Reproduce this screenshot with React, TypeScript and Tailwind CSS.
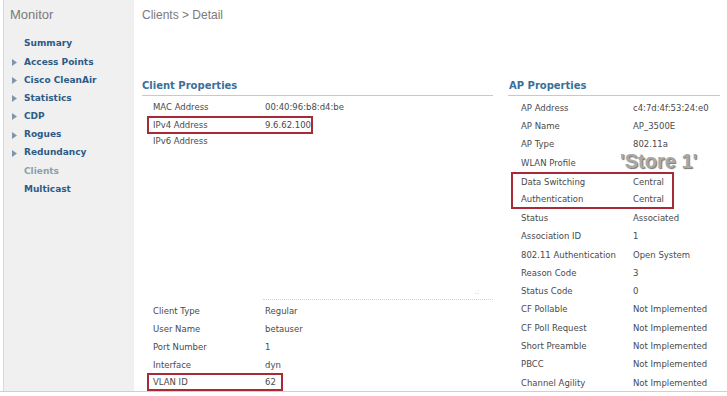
import React from 'react';

const navItems = [
  { label: 'Summary', arrow: false },
  { label: 'Access Points', arrow: true },
  { label: 'Cisco CleanAir', arrow: true },
  { label: 'Statistics', arrow: true },
  { label: 'CDP', arrow: true },
  { label: 'Rogues', arrow: true },
  { label: 'Redundancy', arrow: true },
  { label: 'Clients', arrow: false, muted: true },
  { label: 'Multicast', arrow: false },
];

const apRows: [string, string][] = [
  ['AP Address', 'c4:7d:4f:53:24:e0'],
  ['AP Name', 'AP_3500E'],
  ['AP Type', '802.11a'],
  ['WLAN Profile', ''],
  ['Data Switching', 'Central'],
  ['Authentication', 'Central'],
  ['Status', 'Associated'],
  ['Association ID', '1'],
  ['802.11 Authentication', 'Open System'],
  ['Reason Code', '3'],
  ['Status Code', '0'],
  ['CF Pollable', 'Not Implemented'],
  ['CF Poll Request', 'Not Implemented'],
  ['Short Preamble', 'Not Implemented'],
  ['PBCC', 'Not Implemented'],
  ['Channel Agility', 'Not Implemented'],
];

const Row = ({ label, value, h = 'h-[18.3px]' }: { label: string; value: string; h?: string }) => (
  <div className={`flex items-center ${h}`}>
    <span className="w-[112px] shrink-0">{label}</span>
    <span>{value}</span>
  </div>
);

const Arrow = () => (
  <svg width="5" height="7" viewBox="0 0 5 7" className="mr-[7px]">
    <polygon points="0,0 5,3.5 0,7" fill="#8196a8" />
  </svg>
);

export default function App() {
  return (
    <div className="h-[396px] w-[727px] overflow-hidden bg-white font-['DejaVu_Sans',sans-serif] text-[8.5px] text-[#4a4a4a]">
      <div className="flex h-[392px] border-b border-[#cfcfcf]">
        {/* sidebar */}
        <aside className="ml-[3px] w-[131px] shrink-0 border-l border-[#d8d8d8] bg-[#f0f0f0]">
          <div className="pl-[6px] pt-[7px] font-['Liberation_Sans',sans-serif] text-[13px] leading-[16px] text-[#7a7a7a]">
            Monitor
          </div>
          <nav className="mt-[12px] flex flex-col pl-[8px]">
            {navItems.map((item) => (
              <div key={item.label} className="flex h-[18.2px] items-center">
                {item.arrow ? <Arrow /> : <span className="w-[12px]" />}
                <span
                  className={`text-[9px] font-bold ${item.muted ? 'text-[#8aa0ae]' : 'text-[#2d5b86]'}`}
                >
                  {item.label}
                </span>
              </div>
            ))}
          </nav>
        </aside>

        {/* main */}
        <main className="flex-1 pl-[8px]">
          <div className="pt-[8px] font-['Liberation_Sans',sans-serif] text-[12px] leading-[14px] text-[#7a7a7a]">
            Clients &gt; Detail
          </div>

          <div className="mt-[57px] flex">
            {/* client properties */}
            <section className="w-[351px] shrink-0">
              <h2 className="border-b border-[#c9c9c9] pb-[2px] text-[10px] font-bold leading-[14px] text-[#3a6f98]">
                Client Properties
              </h2>
              <div className="pl-[11px] pt-[3px]">
                <Row label="MAC Address" value="00:40:96:b8:d4:be" h="h-[17px]" />
                <div className="-ml-[6px] flex h-[18px] w-[166px] items-center border-2 border-[#a82a36] pl-[4px]">
                  <span className="w-[112px] shrink-0">IPv4 Address</span>
                  <span>9.6.62.100</span>
                </div>
                <Row label="IPv6 Address" value="" h="h-[14px]" />
                <div className="relative ml-[110px] h-[152px] border-b border-dotted border-[#d4d4d4]">
                  <span className="absolute bottom-[3px] right-[14px] text-[7px] leading-[7px] text-[#bbb]">.:</span>
                </div>
                <div className="pt-[2px]">
                  <Row label="Client Type" value="Regular" h="h-[18px]" />
                  <Row label="User Name" value="betauser" h="h-[18px]" />
                  <Row label="Port Number" value="1" h="h-[18px]" />
                  <Row label="Interface" value="dyn" h="h-[18px]" />
                  <div className="-ml-[6px] -mt-[1px] flex h-[18px] w-[136px] items-center border-2 border-[#a82a36] pl-[4px]">
                    <span className="w-[112px] shrink-0">VLAN ID</span>
                    <span>62</span>
                  </div>
                </div>
              </div>
            </section>

            {/* ap properties */}
            <section className="ml-[15px] w-[212px] shrink-0">
              <h2 className="border-b border-[#c9c9c9] pb-[2px] pl-[1px] text-[10px] font-bold leading-[14px] text-[#3a6f98]">
                AP Properties
              </h2>
              <div className="pl-[13px] pt-[3px]">
                {apRows.slice(0, 3).map(([l, v]) => (
                  <Row key={l} label={l} value={v} />
                ))}
                <div className="flex h-[18.3px] items-center">
                  <span className="w-[112px] shrink-0">WLAN Profile</span>
                  <span className="relative">
                    <span className="absolute -left-[13px] -top-[12px] whitespace-nowrap font-['Liberation_Sans',sans-serif] text-[20px] font-bold leading-[20px] text-[#a8a8a8] [text-shadow:1px_1px_1px_#777]">
                      'Store 1'
                    </span>
                  </span>
                </div>
                <div className="-ml-[10px] w-[163px] border-2 border-[#a82a36] pl-[8px]">
                  <Row label="Data Switching" value="Central" h="h-[16.5px]" />
                  <Row label="Authentication" value="Central" h="h-[16.5px]" />
                </div>
                {apRows.slice(6).map(([l, v]) => (
                  <Row key={l} label={l} value={v} />
                ))}
              </div>
            </section>
          </div>
        </main>
      </div>
    </div>
  );
}
